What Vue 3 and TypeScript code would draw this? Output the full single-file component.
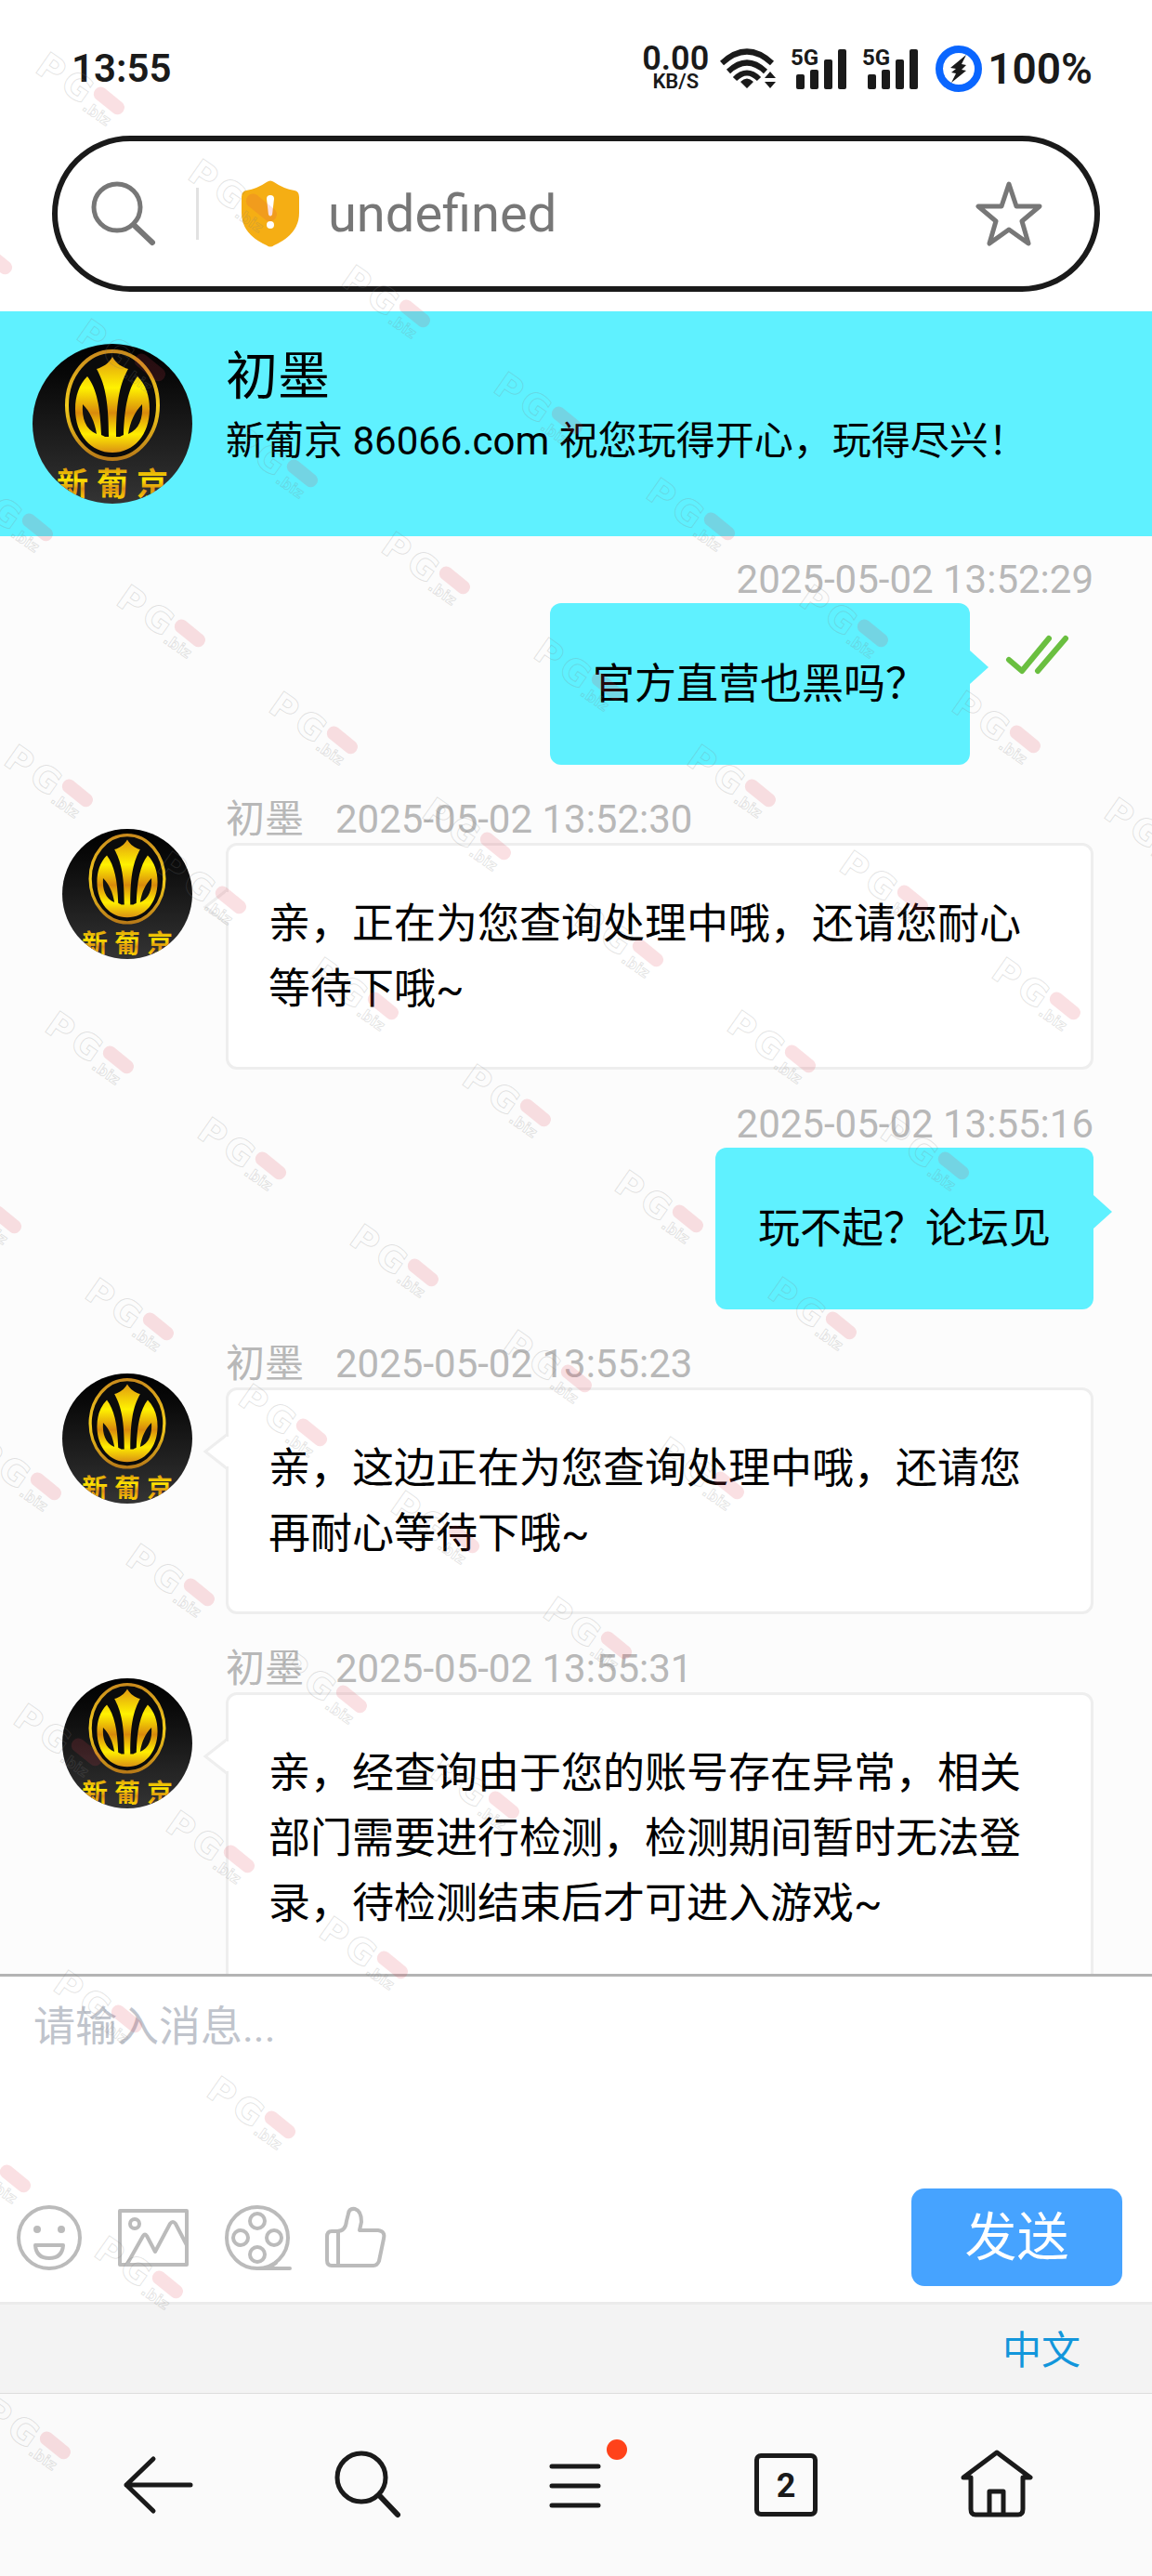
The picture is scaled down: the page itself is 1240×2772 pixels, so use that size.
<script setup lang="ts">
import { ref } from 'vue'

interface Message {
  id: number
  from: 'agent' | 'me'
  time: string
  text: string
  read?: boolean
}

interface Mark {
  key: string
  transform: string
}

const agentName = '初墨'
const address = ref('undefined')
const draft = ref('')
const signalBars = [0, 1]

const messages: Message[] = [
  { id: 1, from: 'me', time: '2025-05-02 13:52:29', text: '官方直营也黑吗？', read: true },
  { id: 2, from: 'agent', time: '2025-05-02 13:52:30', text: '亲，正在为您查询处理中哦，还请您耐心等待下哦~' },
  { id: 3, from: 'me', time: '2025-05-02 13:55:16', text: '玩不起？论坛见' },
  { id: 4, from: 'agent', time: '2025-05-02 13:55:23', text: '亲，这边正在为您查询处理中哦，还请您再耐心等待下哦~' },
  { id: 5, from: 'agent', time: '2025-05-02 13:55:31', text: '亲，经查询由于您的账号存在异常，相关部门需要进行检测，检测期间暂时无法登录，待检测结束后才可进入游戏~' },
]

// The watermark repeats on a slanted grid.
const marks: Mark[] = []
for (let row = 0; row < 11; row++) {
  for (let col = 0; col < 8; col++) {
    const x = Math.round(37 + col * 164.3 - row * 120.8)
    const y = Math.round(82 + col * 114.5 + row * 172.1)
    if (x > -100) marks.push({ key: `${row}-${col}`, transform: `translate(${x} ${y}) rotate(35)` })
  }
}
</script>

<template>
  <div class="app">
    <svg class="sprite" aria-hidden="true">
      <defs>
        <linearGradient id="night" x1="0" y1="0" x2="0" y2="1">
          <stop offset="0" stop-color="#000" />
          <stop offset="0.2" stop-color="#080808" />
          <stop offset="1" stop-color="#343434" />
        </linearGradient>
        <linearGradient id="gold" gradientUnits="userSpaceOnUse" x1="0" y1="14" x2="0" y2="118">
          <stop offset="0" stop-color="#e09a10" />
          <stop offset="0.32" stop-color="#fff200" />
          <stop offset="0.58" stop-color="#d98a0c" />
          <stop offset="0.8" stop-color="#ffee00" />
          <stop offset="1" stop-color="#d88c14" />
        </linearGradient>
        <linearGradient id="ring" x1="0" y1="0" x2="0" y2="1">
          <stop offset="0" stop-color="#c98a1c" />
          <stop offset="0.5" stop-color="#f3cc1c" />
          <stop offset="1" stop-color="#b87a18" />
        </linearGradient>
        <linearGradient id="goldText" x1="0" y1="0" x2="0" y2="1">
          <stop offset="0.15" stop-color="#d0860c" />
          <stop offset="0.45" stop-color="#ffe600" />
          <stop offset="0.65" stop-color="#dc9010" />
          <stop offset="0.9" stop-color="#ffd800" />
        </linearGradient>
        <clipPath id="disc"><circle cx="86" cy="86" r="86" /></clipPath>
        <symbol id="crest" viewBox="0 0 172 172">
          <g clip-path="url(#disc)">
            <rect width="172" height="172" fill="url(#night)" />
            <ellipse cx="86" cy="66" rx="49" ry="58" fill="#0b0b0b" stroke="url(#ring)" stroke-width="4" />
            <path
              fill="url(#gold)"
              d="M86 14 C82 21 76 25 69 27 C77 42 82 58 82 100 L78 100 C74 98 74 98 74 98 C73 68 69 48 59 35 C50 44 46 56 46 70 C46 98 63 117 86 117 C109 117 126 98 126 70 C126 56 122 44 113 35 C103 48 99 68 98 98 C98 98 98 98 94 100 L90 100 C90 58 95 42 103 27 C96 25 90 21 86 14 Z"
            />
            <path fill="#111" d="M54 65 C53 80 57 92 69 97 C67 84 62 73 54 65 Z M118 65 C119 80 115 92 103 97 C105 84 110 73 118 65 Z" />
            <g fill="url(#goldText)" font-family="Noto Sans CJK SC, sans-serif" font-weight="700" font-size="34" text-anchor="middle">
              <text x="43" y="163">新</text>
              <text x="86" y="163">葡</text>
              <text x="129" y="163">京</text>
            </g>
          </g>
        </symbol>
      </defs>
    </svg>

    <header class="status">
      <time class="clock">13:55</time>
      <div class="status-icons">
        <div class="speed"><span class="rate">0.00</span><span class="unit">KB/S</span></div>
        <svg class="wifi" viewBox="0 0 60 44" aria-label="Wi-Fi">
          <g fill="none" stroke="#1a1a1a" stroke-width="6">
            <path d="M2 16 Q29 -9 56 16" />
            <path d="M9 25 Q29 6 49 25" />
            <path d="M16 33 Q29 20 42 33" />
          </g>
          <path fill="#1a1a1a" d="M29 43 L22 36 Q29 29 36 36 Z M48 32 L54 25 L60 32 Z M48 36 L60 36 L54 43 Z" />
        </svg>
        <svg v-for="n in signalBars" :key="n" class="signal" viewBox="0 0 60 44">
          <text x="0" y="18" font-family="Roboto, sans-serif" font-weight="700" font-size="24" fill="#1a1a1a">5G</text>
          <g fill="#1a1a1a">
            <rect x="6" y="28" width="9" height="16" rx="2" />
            <rect x="21" y="23" width="9" height="21" rx="2" />
            <rect x="36" y="12" width="9" height="32" rx="2" />
            <rect x="51" y="1" width="9" height="43" rx="2" />
          </g>
        </svg>
        <svg class="battery" viewBox="0 0 50 50">
          <circle cx="25" cy="25" r="21" fill="#fff" stroke="#0a66ff" stroke-width="8" />
          <path fill="#1a1a1a" d="M33 10 L16 24 L22 25 L17 29 L22 30 L17 40 L33 27 L28 26 L33 21 L28 20 Z" />
        </svg>
        <span class="percent">100%</span>
      </div>
    </header>

    <form class="address" @submit.prevent>
      <svg class="find" viewBox="0 0 70 70">
        <g fill="none" stroke="#777" stroke-linecap="round">
          <circle cx="28" cy="28" r="25" stroke-width="5" />
          <path d="M46 47 L66 66" stroke-width="6" />
        </g>
      </svg>
      <span class="divider"></span>
      <svg class="shield" viewBox="0 0 64 72">
        <path fill="#f5ae14" d="M28 2 Q32 -1 36 2 Q46 9 58 11 Q63 12 63 18 V35 Q63 58 36 70 Q32 73 28 70 Q1 58 1 35 V18 Q1 12 6 11 Q18 9 28 2 Z" />
        <path fill="#fff" d="M28 20 Q28 16 32 16 Q36 16 36 20 L34 37 Q32 40 30 37 Z" />
        <circle cx="32" cy="48" r="4" fill="#fff" />
      </svg>
      <input v-model="address" class="url" type="text" aria-label="网址" />
      <button class="plain" type="button" aria-label="收藏">
        <svg class="star" viewBox="0 0 72 70">
          <path fill="none" stroke="#777" stroke-width="5" stroke-linejoin="round" d="M36 3 L44 27 L69 27 L50 43 L57 67 L36 52 L15 67 L22 43 L3 27 L28 27 Z" />
        </svg>
      </button>
    </form>

    <section class="profile">
      <svg class="profile-avatar"><use href="#crest" /></svg>
      <div class="profile-info">
        <h1>{{ agentName }}</h1>
        <p>新葡京 86066.com 祝您玩得开心，玩得尽兴！</p>
      </div>
    </section>

    <main class="chat">
      <article v-for="m in messages" :key="m.id" class="row" :class="m.from">
        <svg v-if="m.from === 'agent'" class="avatar"><use href="#crest" /></svg>
        <div class="body">
          <div class="meta">
            <span v-if="m.from === 'agent'">{{ agentName }}</span>
            <time>{{ m.time }}</time>
          </div>
          <div class="line">
            <div class="bubble">
              <svg v-if="m.from === 'me'" class="tail-right" viewBox="0 0 22 36">
                <path fill="#5ff1ff" d="M0 0 L1 0 L21 18 L1 36 L0 36 Z" />
              </svg>
              <svg v-else class="tail-left" viewBox="0 0 28 40">
                <path fill="#fff" stroke="#eee" stroke-width="3" d="M26 2 L3 20 L26 38" />
                <path fill="#fff" d="M25 4 H28 V36 H25 Z" />
              </svg>
              {{ m.text }}
            </div>
            <svg v-if="m.read" class="ticks" viewBox="0 0 70 44" aria-label="已读">
              <g fill="none" stroke="#6abf40" stroke-width="6" stroke-linecap="round" stroke-linejoin="round">
                <path d="M4 27 L18 39 L47 4" />
                <path d="M35 39 L65 4" />
              </g>
            </svg>
          </div>
        </div>
      </article>
    </main>

    <form class="composer" @submit.prevent>
      <textarea v-model="draft" placeholder="请输入消息..." aria-label="消息"></textarea>
      <div class="tools">
        <button class="plain" type="button" aria-label="表情">
          <svg class="tool" viewBox="0 0 76 76">
            <circle cx="38" cy="38" r="33" />
            <path d="M23 46 H53 Q52 60 38 60 Q24 60 23 46 Z" />
            <circle cx="25" cy="29" r="4" class="dot" />
            <circle cx="51" cy="29" r="4" class="dot" />
          </svg>
        </button>
        <button class="plain" type="button" aria-label="图片">
          <svg class="tool" viewBox="0 0 76 76">
            <rect x="2" y="9" width="72" height="58" />
            <circle cx="18" cy="23" r="5" />
            <path d="M10 66 L27 36 Q29 33 31 36 L40 53 L56 23 Q59 19 62 23 L74 46" />
          </svg>
        </button>
        <button class="plain" type="button" aria-label="视频">
          <svg class="tool" viewBox="0 0 76 76">
            <circle cx="38" cy="38" r="33" />
            <circle cx="38" cy="20" r="8" />
            <circle cx="20" cy="38" r="8" />
            <circle cx="56" cy="38" r="8" />
            <circle cx="38" cy="56" r="8" />
            <path d="M38 71 H73 M52 69 L58 65" />
          </svg>
        </button>
        <button class="plain" type="button" aria-label="评价">
          <svg class="tool" viewBox="0 0 76 76">
            <path d="M6 31 H12 Q21 31 22 20 L24 12 Q25 6 31 7 Q38 9 38 21 L36 30 H56 Q64 31 62 39 L57 63 Q55 68 51 68 H6 Q1 68 1 62 V37 Q1 31 6 31 Z M13 31 V68" />
          </svg>
        </button>
        <button class="send" type="submit">发送</button>
      </div>
    </form>

    <div class="language"><a href="#language">中文</a></div>

    <nav class="nav">
      <button class="plain" type="button" aria-label="后退">
        <svg class="nav-icon" viewBox="0 0 76 76"><path d="M75 38 H6 M35 10 L6 38 L35 66" /></svg>
      </button>
      <button class="plain" type="button" aria-label="搜索">
        <svg class="nav-icon" viewBox="0 0 76 76"><circle cx="33" cy="30" r="26" /><path d="M52 49 L72 70" class="thick" /></svg>
      </button>
      <button class="plain" type="button" aria-label="菜单">
        <svg class="nav-icon" viewBox="0 0 76 76"><path d="M12 18 H62 M12 39 H62 M12 60 H62" /></svg>
        <span class="badge"></span>
      </button>
      <button class="plain" type="button" aria-label="标签页">
        <span class="tabs">2</span>
      </button>
      <button class="plain" type="button" aria-label="主页">
        <svg class="nav-icon" viewBox="0 0 76 76"><path d="M11 30 H3 L39 3 L75 30 H67 M11 30 V64 Q11 70 16 70 H62 Q67 70 67 64 V30 M31 70 V45 H46 V70" /></svg>
      </button>
    </nav>

    <svg class="watermark" aria-hidden="true">
      <g v-for="mark in marks" :key="mark.key" :transform="mark.transform">
        <g fill="none" stroke="#808080" stroke-opacity="0.22" font-family="DejaVu Sans, sans-serif" font-weight="700">
          <text x="-4" y="-4" font-size="38">P</text>
          <text x="29" y="-4" font-size="38">G</text>
          <text x="62" y="0" font-size="16">.biz</text>
        </g>
        <rect x="62" y="-32" width="38" height="15" rx="7" fill="#e04050" fill-opacity="0.16" transform="rotate(4 81 -24)" />
      </g>
    </svg>
  </div>
</template>

<style>
body {
  margin: 0;
}
</style>

<style scoped>
.app {
  position: relative;
  display: flex;
  flex-direction: column;
  height: 100vh;
  overflow: hidden;
  background: #fff;
  color: #000;
  font-family: Roboto, 'Noto Sans CJK SC', sans-serif;
}

.app * {
  box-sizing: border-box;
}

svg {
  display: block;
  flex: none;
}

.sprite {
  position: absolute;
  width: 0;
  height: 0;
}

.plain {
  display: flex;
  padding: 0;
  border: 0;
  background: none;
}

.status {
  display: flex;
  flex: none;
  align-items: center;
  justify-content: space-between;
  height: 146px;
  padding: 2px 64px 0 77px;
  color: #1a1a1a;
  font-weight: 600;
}

.clock {
  font-size: 42px;
  line-height: 52px;
}

.percent {
  font-size: 46px;
  line-height: 52px;
}

.status-icons {
  display: flex;
  align-items: center;
}

.speed {
  display: flex;
  flex-direction: column;
  align-items: center;
  margin-right: 12px;
}

.rate {
  font-size: 36px;
  line-height: 28px;
}

.unit {
  font-size: 22px;
  line-height: 22px;
}

.wifi {
  width: 60px;
  height: 44px;
  margin-right: 16px;
}

.signal {
  width: 60px;
  height: 44px;
  margin-right: 17px;
}

.battery {
  width: 50px;
  height: 50px;
  margin: 0 6px 0 2px;
}

.address {
  display: flex;
  flex: none;
  align-items: center;
  height: 168px;
  margin: 0 56px 21px;
  padding: 0 56px 0 36px;
  border: 6px solid #1a1a1a;
  border-radius: 84px;
}

.find {
  width: 70px;
  height: 70px;
}

.divider {
  width: 3px;
  height: 56px;
  margin: 0 45px 0 43px;
  background: #e2e2e2;
}

.shield {
  width: 64px;
  height: 72px;
}

.url {
  flex: 1;
  min-width: 0;
  margin: 0 30px;
  padding: 0;
  border: 0;
  background: none;
  color: #777;
  font: 400 56px/72px Roboto, 'Noto Sans CJK SC', sans-serif;
}

.star {
  width: 72px;
  height: 70px;
}

.profile {
  display: flex;
  flex: none;
  gap: 36px;
  padding: 35px;
  background: #5ff1ff;
}

.profile-avatar {
  width: 172px;
  height: 172px;
}

.profile-info {
  padding-top: 3px;
}

.profile-info h1 {
  margin: 0;
  font-size: 56px;
  font-weight: 400;
  line-height: 64px;
}

.profile-info p {
  margin: 0;
  font-size: 42px;
  line-height: 76px;
}

.chat {
  display: flex;
  flex: 1;
  flex-direction: column;
  gap: 34px;
  min-height: 0;
  padding: 22px 63px 0 67px;
  overflow: hidden;
  background: #fcfcfc;
}

.row {
  display: flex;
  flex: none;
  gap: 36px;
}

.row.me {
  justify-content: flex-end;
}

.avatar {
  width: 140px;
  height: 140px;
  margin-top: 35px;
}

.agent .body {
  flex: 1;
}

.meta {
  display: flex;
  gap: 34px;
  color: #b8b8b8;
  font-size: 42px;
  line-height: 50px;
}

.me .meta {
  justify-content: flex-end;
}

.line {
  display: flex;
}

.me .line {
  justify-content: flex-end;
}

.bubble {
  position: relative;
  padding: 53px 46px 51px;
  border-radius: 12px;
  background: #5ff1ff;
  font-size: 45px;
  line-height: 70px;
}

.agent .bubble {
  flex: 1;
  padding: 50px 43px 48px;
  border: 3px solid #eee;
  background: #fff;
}

.tail-right {
  position: absolute;
  top: 51px;
  right: -21px;
  width: 22px;
  height: 36px;
}

.tail-left {
  position: absolute;
  top: 46px;
  left: -28px;
  width: 28px;
  height: 40px;
}

.ticks {
  width: 70px;
  height: 44px;
  margin: 34px 25px 0 38px;
}

.composer {
  flex: none;
  border-top: 3px solid #b4b4b4;
  background: #fff;
}

textarea {
  display: block;
  width: 100%;
  height: 228px;
  padding: 20px 36px;
  border: 0;
  background: none;
  font: 400 45px/70px Roboto, 'Noto Sans CJK SC', sans-serif;
  resize: none;
}

textarea::placeholder {
  color: #c0c4cc;
}

.tools {
  display: flex;
  align-items: center;
  gap: 36px;
  padding: 0 32px 17px 15px;
}

.tool {
  width: 76px;
  height: 76px;
  overflow: visible;
  fill: none;
  stroke: #bbb;
  stroke-width: 4;
  stroke-linejoin: round;
  stroke-linecap: round;
}

.tool .dot {
  fill: #bbb;
  stroke: none;
}

.send {
  width: 227px;
  height: 105px;
  margin-left: auto;
  padding: 0;
  border: 0;
  border-radius: 14px;
  background: #46a3ff;
  color: #fff;
  font: 400 56px/80px Roboto, 'Noto Sans CJK SC', sans-serif;
}

.language {
  display: flex;
  flex: none;
  align-items: center;
  justify-content: flex-end;
  height: 99px;
  padding: 4px 77px 0;
  border-top: 3px solid #ebebeb;
  border-bottom: 1px solid #ddd;
  background: #f3f3f3;
}

.language a {
  color: #1296db;
  font-size: 42px;
  line-height: 60px;
  text-decoration: none;
}

.nav {
  display: flex;
  flex: none;
  height: 196px;
  padding: 0 55px;
  background: #fafafa;
}

.nav .plain {
  position: relative;
  flex: 1;
  align-items: center;
  justify-content: center;
}

.nav-icon {
  width: 76px;
  height: 76px;
  overflow: visible;
  fill: none;
  stroke: #1a1a1a;
  stroke-width: 5;
  stroke-linejoin: round;
  stroke-linecap: round;
}

.nav-icon .thick {
  stroke-width: 6;
}

.badge {
  position: absolute;
  top: 49px;
  left: calc(50% + 33px);
  width: 22px;
  height: 22px;
  border-radius: 50%;
  background: #ff421a;
}

.tabs {
  width: 68px;
  height: 68px;
  border: 5px solid #1a1a1a;
  border-radius: 7px;
  color: #1a1a1a;
  font: 700 36px/60px Roboto, sans-serif;
  text-align: center;
}

.watermark {
  position: absolute;
  inset: 0;
  width: 100%;
  height: 100%;
  pointer-events: none;
}
</style>
